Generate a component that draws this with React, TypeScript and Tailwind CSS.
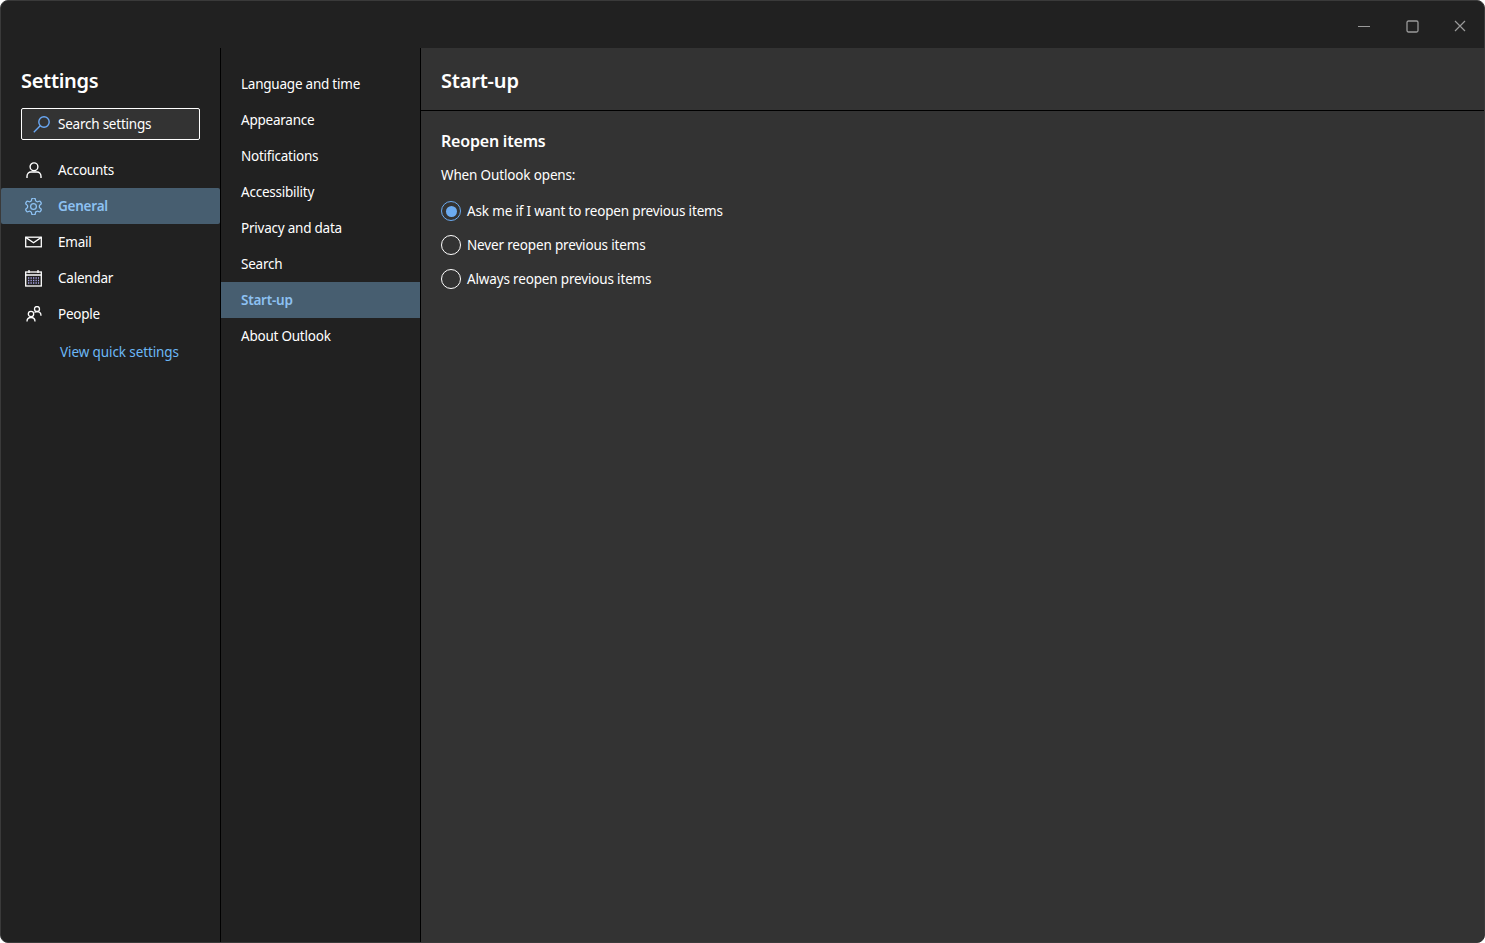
import type { ReactNode } from "react";

const font = "font-['Noto_Sans','Open_Sans',sans-serif]";

const PersonIcon = () => (
  <svg width="16" height="16" viewBox="0 0 16 16" fill="none" stroke="currentColor" strokeWidth="1.400">
    <circle cx="8" cy="4.800" r="3.900" />
    <path d="M1 16v-1.600c0-2.600 1.800-4.400 4-4.400h6c2.200 0 4 1.800 4 4.400V16" />
  </svg>
);

const GearIcon = () => (
  <svg width="17" height="17" viewBox="2 2 20 20" fill="none" stroke="currentColor" strokeWidth="1.500" strokeLinejoin="round">
    <path d="M12.220 2h-.44a2 2 0 0 0-2 2v.18a2 2 0 0 1-1 1.730l-.43.250a2 2 0 0 1-2 0l-.15-.080a2 2 0 0 0-2.730.730l-.22.380a2 2 0 0 0 .730 2.730l.15.100a2 2 0 0 1 1 1.720v.510a2 2 0 0 1-1 1.740l-.15.090a2 2 0 0 0-.730 2.730l.22.380a2 2 0 0 0 2.730.730l.15-.080a2 2 0 0 1 2 0l.43.250a2 2 0 0 1 1 1.730V20a2 2 0 0 0 2 2h.44a2 2 0 0 0 2-2v-.18a2 2 0 0 1 1-1.730l.43-.250a2 2 0 0 1 2 0l.15.080a2 2 0 0 0 2.730-.730l.22-.390a2 2 0 0 0-.730-2.730l-.15-.080a2 2 0 0 1-1-1.740v-.5a2 2 0 0 1 1-1.740l.15-.090a2 2 0 0 0 .730-2.730l-.22-.380a2 2 0 0 0-2.730-.730l-.15.080a2 2 0 0 1-2 0l-.43-.250a2 2 0 0 1-1-1.730V4a2 2 0 0 0-2-2z" />
    <circle cx="12" cy="12" r="3.400" />
  </svg>
);

const MailIcon = () => (
  <svg width="17" height="16" viewBox="0 0 17 16" fill="none" stroke="currentColor" strokeWidth="1.300">
    <rect x="0.700" y="3.200" width="15.600" height="9.600" />
    <path d="M0.700 3.400 8.500 8.800l7.800-5.400" />
  </svg>
);

const CalendarIcon = () => (
  <svg width="17" height="17" viewBox="0 0 17 17" fill="none" stroke="currentColor" strokeWidth="1.300">
    <rect x="0.700" y="2" width="15.600" height="14" />
    <path d="M0.700 5h15.600M4 0v3M13 0v3" />
    <path d="M3 8h11M3 10.500h11M3 13h11" stroke="#a9a4e8" strokeDasharray="1.300 1.200" strokeWidth="1.300" />
  </svg>
);

const PeopleIcon = () => (
  <svg width="16" height="16" viewBox="0 0 16 16" fill="none" stroke="currentColor" strokeWidth="1.300">
    <circle cx="5" cy="8" r="2.700" />
    <path d="M1 15.500c0-2.400 1.500-4 4-4s4 1.600 4 4" />
    <circle cx="11" cy="3" r="2.500" />
    <path d="M8.500 6.500c.7-.6 1.500-.8 2.500-.8 2.500 0 4 1.500 4 4" />
  </svg>
);

const SearchIcon = () => (
  <svg width="17" height="17" viewBox="0 0 17 17" fill="none" stroke="#6aa8f5" strokeWidth="1.400">
    <circle cx="11" cy="6" r="5.200" />
    <path d="M7.200 9.800 0.800 16.200" />
  </svg>
);

const NavRow = ({ icon, label, active }: { icon: ReactNode; label: string; active?: boolean }) => (
  <div className={`flex items-center h-9 pl-6 ${active ? "bg-[#475e70] text-[#8dc1f2] font-semibold rounded-[2px]" : "text-white"}`}>
    <span className="w-[17px] h-[18px] flex items-center justify-center">{icon}</span>
    <span className="ml-4 text-[13.500px] tracking-[-0.230px]">{label}</span>
  </div>
);

const SubRow = ({ label, active }: { label: string; active?: boolean }) => (
  <div className={`flex items-center h-9 pl-5 text-[13.500px] tracking-[-0.230px] ${active ? "bg-[#475e70] text-[#8dc1f2] font-semibold" : "text-white"}`}>
    {label}
  </div>
);

const Radio = ({ label, checked }: { label: string; checked?: boolean }) => (
  <div className="flex items-center h-[34px]">
    <span className={`w-5 h-5 rounded-full border flex items-center justify-center ${checked ? "border-[#6cabf0]" : "border-white"}`}>
      {checked && <span className="w-[11px] h-[11px] rounded-full bg-[#6cabf0]" />}
    </span>
    <span className="ml-[6px] text-white text-[13.500px] tracking-[-0.160px]">{label}</span>
  </div>
);

const subItems = ["Language and time", "Appearance", "Notifications", "Accessibility", "Privacy and data", "Search", "Start-up", "About Outlook"];

export default function App() {
  return (
    <div className={`${font} h-[943px] w-[1485px] overflow-hidden bg-[#212121] flex flex-col rounded-[8px] border border-[#3a3a3a]`}>
      <div className="h-[47px] shrink-0 flex justify-end items-center pt-[3px] text-[#9a9a9a]">
        <div className="w-12 flex justify-center">
          <svg width="12" height="12" viewBox="0 0 12 12" stroke="currentColor" fill="none"><path d="M0 6.500h12" /></svg>
        </div>
        <div className="w-12 flex justify-center">
          <svg width="13" height="13" viewBox="0 0 13 13" stroke="currentColor" strokeWidth="1.300" fill="none"><rect x="1" y="1" width="11" height="11" rx="1.500" /></svg>
        </div>
        <div className="w-12 flex justify-center">
          <svg width="12" height="12" viewBox="0 0 12 12" stroke="currentColor" strokeWidth="1.200" fill="none"><path d="M1 1l10 10M11 1 1 11" /></svg>
        </div>
      </div>
      <div className="flex flex-1 min-h-0">
        <div className="w-[220px] shrink-0 border-r border-black">
          <div className="pl-5 pt-[18px] h-[60px] text-white text-[20px] font-semibold tracking-[-0.300px] leading-[30px]">Settings</div>
          <div className="ml-5 w-[179px] h-8 border border-white rounded-[2px] bg-[#333333] flex items-center pl-[11px] text-white">
            <SearchIcon />
            <span className="ml-[8px] text-[13.500px] tracking-[-0.230px]">Search settings</span>
          </div>
          <div className="mt-3">
            <NavRow icon={<PersonIcon />} label="Accounts" />
            <NavRow icon={<GearIcon />} label="General" active />
            <NavRow icon={<MailIcon />} label="Email" />
            <NavRow icon={<CalendarIcon />} label="Calendar" />
            <NavRow icon={<PeopleIcon />} label="People" />
          </div>
          <div className="mt-[10px] pl-[59px] h-5 leading-5 text-[#6cb8f6] text-[13.500px] tracking-[-0.100px]">View quick settings</div>
        </div>
        <div className="w-[200px] shrink-0 border-r border-black pt-[18px]">
          {subItems.map((item) => (
            <SubRow key={item} label={item} active={item === "Start-up"} />
          ))}
        </div>
        <div className="flex-1 bg-[#333333]">
          <div className="h-[63px] border-b border-black pl-5 pt-[18px] text-white text-[20px] font-semibold tracking-[-0.200px] leading-[30px]">Start-up</div>
          <div className="pl-5 pt-[18px]">
            <div className="text-white text-[16px] font-semibold tracking-[-0.200px] leading-6">Reopen items</div>
            <div className="mt-[12px] text-white text-[13.500px] tracking-[-0.150px] leading-5">When Outlook opens:</div>
            <div className="mt-[9px]">
              <Radio label="Ask me if I want to reopen previous items" checked />
              <Radio label="Never reopen previous items" />
              <Radio label="Always reopen previous items" />
            </div>
          </div>
        </div>
      </div>
    </div>
  );
}
